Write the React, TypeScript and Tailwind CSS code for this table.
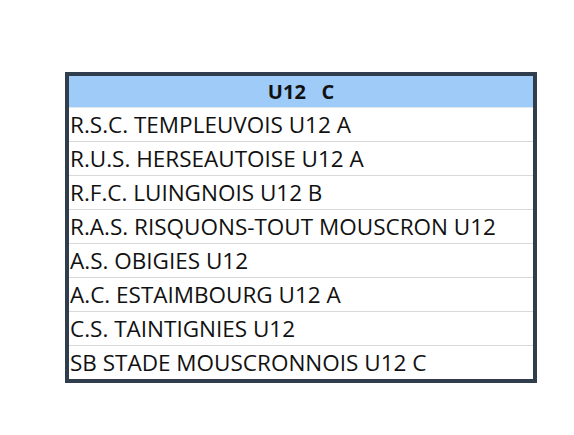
const teams = [
  'R.S.C. TEMPLEUVOIS U12 A',
  'R.U.S. HERSEAUTOISE U12 A',
  'R.F.C. LUINGNOIS U12 B',
  'R.A.S. RISQUONS-TOUT MOUSCRON U12',
  'A.S. OBIGIES U12',
  'A.C. ESTAIMBOURG U12 A',
  'C.S. TAINTIGNIES U12',
  'SB STADE MOUSCRONNOIS U12 C',
]

export default function App() {
  return (
    <div
      className="h-[435px] w-[574px] bg-white pl-[65px] pt-[72px]"
      style={{ fontFamily: '"Open Sans", "Noto Sans", sans-serif' }}
    >
      <div className="w-[472px] border-4 border-[#2f3d4c] bg-white">
        <div className="flex h-[32px] items-center justify-center border-b border-[#dfe6ee] bg-[#9ecbf8] text-[20px] font-bold text-[#111]">
          <span className="whitespace-pre">U12   C</span>
        </div>
        {teams.map((t, i) => (
          <div
            key={t}
            className={`flex items-center pl-[1px] pt-[2px] text-[22.5px] leading-none text-[#111] ${
              i < teams.length - 1 ? 'h-[34px] border-b border-[#d9d9d9]' : 'h-[33px]'
            }`}
          >
            {t}
          </div>
        ))}
      </div>
    </div>
  )
}
